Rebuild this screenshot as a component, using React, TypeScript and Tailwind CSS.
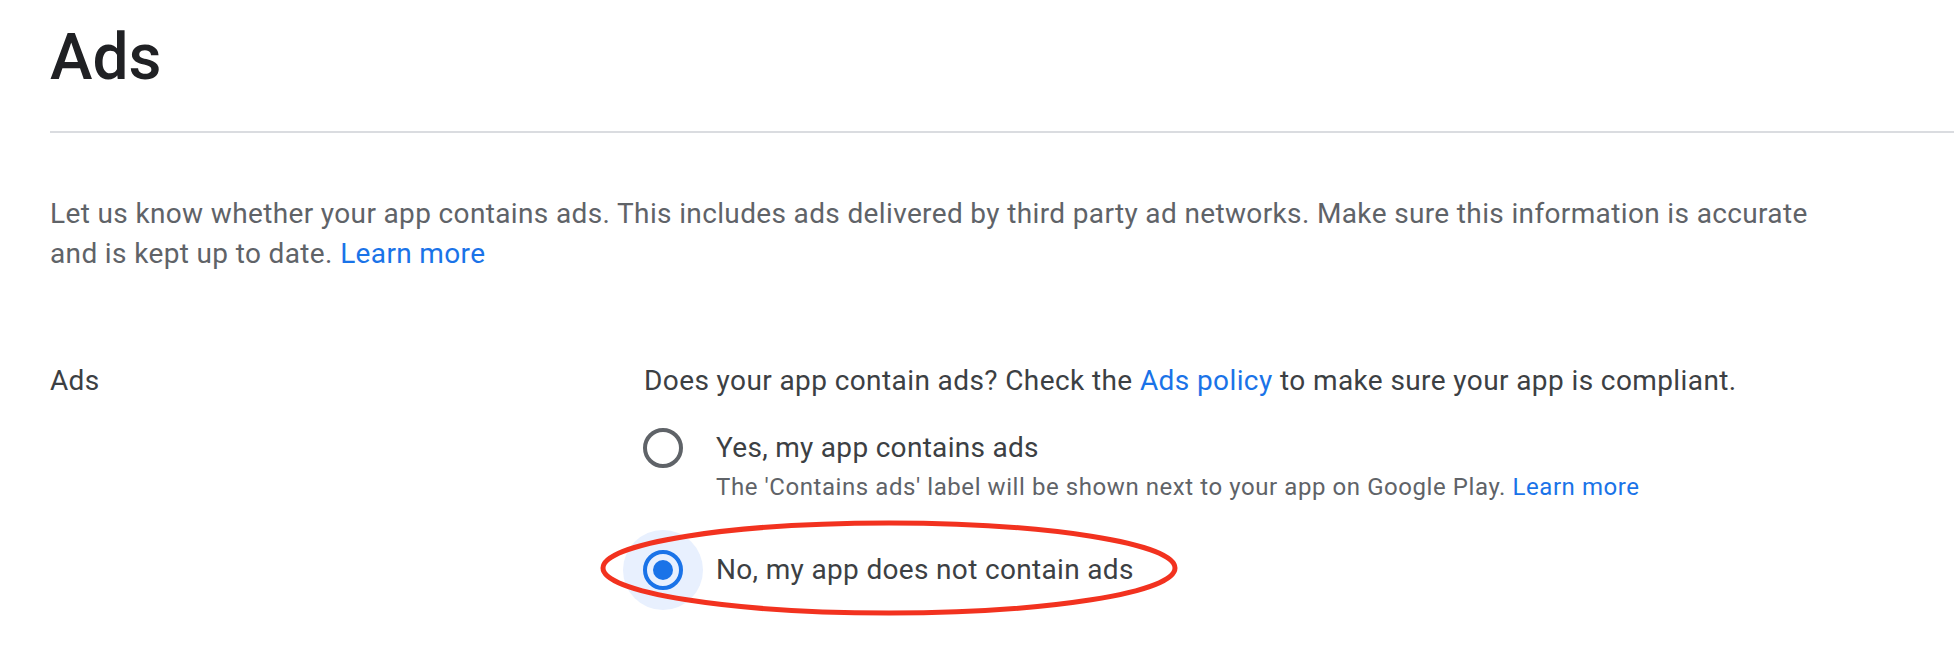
import React from "react";

// Ads declaration page (Play Console style), rendered at 2x density
const FONT = { fontFamily: "Roboto, 'Liberation Sans', Arial, sans-serif" };

function Radio({ checked }: { checked?: boolean }) {
  return (
    <div
      className={`w-[80px] h-[80px] shrink-0 rounded-full flex items-center justify-center ${
        checked ? "bg-[#e8f0fe]" : ""
      }`}
    >
      {checked ? (
        <div className="w-[40px] h-[40px] rounded-full border-[4px] border-[#1a73e8] flex items-center justify-center">
          <div className="w-[20px] h-[20px] rounded-full bg-[#1a73e8]" />
        </div>
      ) : (
        <div className="w-[40px] h-[40px] rounded-full border-[4px] border-[#5f6368]" />
      )}
    </div>
  );
}

export default function App() {
  return (
    <div className="relative min-h-[655px] bg-white overflow-hidden pl-[50px]" style={FONT}>
      {/* Header */}
      <h1 className="mt-[20px] text-[64px] leading-[76px] font-medium text-[#202124]">Ads</h1>
      <div className="mt-[35px] h-[2px] bg-[#dadce0]" />

      {/* Intro */}
      <p className="mt-[61px] max-w-[1820px] text-[28px] leading-[40px] tracking-[0.36px] text-[#5f6368]">
        <span>
          Let us know whether your app contains ads. This includes ads delivered by third party ad
          networks. Make sure this information is accurate
        </span>
        <br />
        <span>and is kept up to date. </span>
        <a className="text-[#1a73e8]">Learn more</a>
      </p>

      {/* Ads question row */}
      <div className="mt-[87px] flex">
        <div className="w-[594px] shrink-0 text-[28px] leading-[40px] tracking-[0.3px] text-[#3c4043]">
          Ads
        </div>
        <div className="flex flex-col">
          <p className="text-[28px] leading-[40px] tracking-[0.4px] text-[#3c4043]">
            Does your app contain ads? Check the <a className="text-[#1a73e8]">Ads policy</a> to
            make sure your app is compliant.
          </p>

          <div className="mt-[7px] ml-[-21px] flex items-start">
            <Radio />
            <div className="ml-[13px] pt-[20px] flex flex-col">
              <span className="text-[28px] leading-[40px] tracking-[0.3px] text-[#3c4043]">
                Yes, my app contains ads
              </span>
              <span className="mt-[1px] text-[24px] leading-[36px] tracking-[0.57px] text-[#5f6368]">
                The 'Contains ads' label will be shown next to your app on Google Play.{" "}
                <a className="text-[#1a73e8]">Learn more</a>
              </span>
            </div>
          </div>

          <div className="mt-[25px] ml-[-21px] flex items-start">
            <Radio checked />
            <div className="ml-[13px] pt-[20px]">
              <span className="text-[28px] leading-[40px] tracking-[0.33px] text-[#3c4043]">
                No, my app does not contain ads
              </span>
            </div>
          </div>
        </div>
      </div>

      {/* Red annotation ellipse */}
      <svg
        className="absolute left-[598px] top-[519px]"
        width="584"
        height="100"
        viewBox="0 0 584 100"
        fill="none"
      >
        <ellipse cx="291" cy="49" rx="286" ry="45" stroke="#f2321f" strokeWidth="5" />
      </svg>
    </div>
  );
}
